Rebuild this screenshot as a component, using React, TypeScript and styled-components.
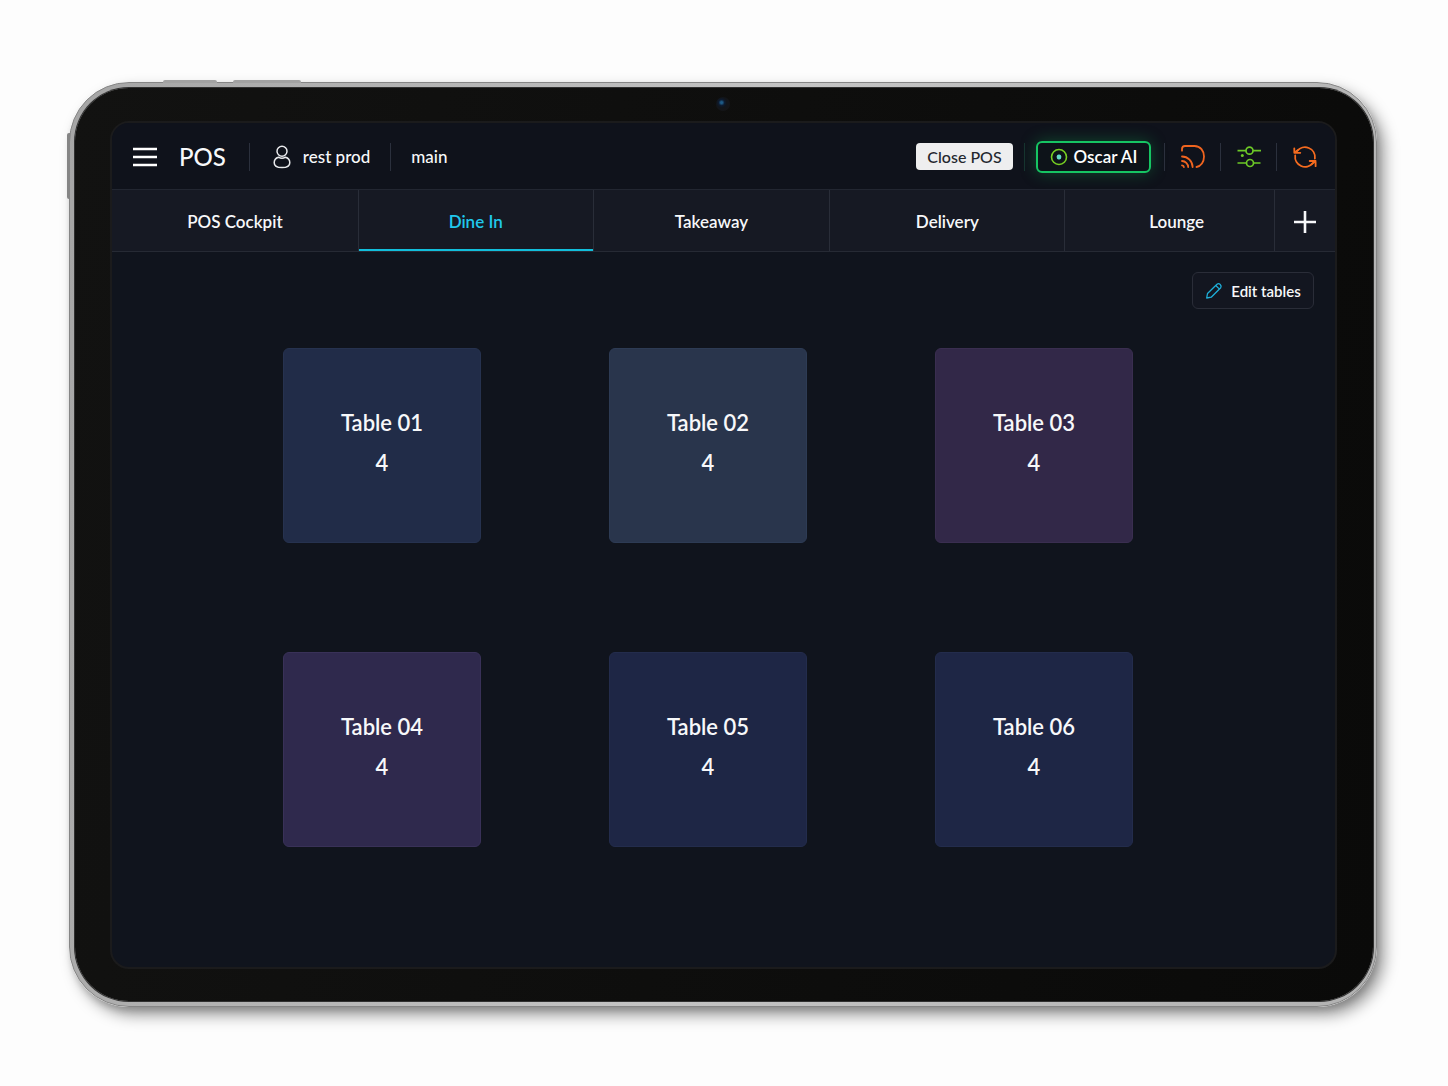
import React, { useState } from "react";
import styled, { createGlobalStyle } from "styled-components";

const GlobalStyle = createGlobalStyle`
  *, *::before, *::after { box-sizing: border-box; }
  body {
    margin: 0;
    background: #fdfdfd;
    color: #f7f8fa;
    font-family: Lato, "Open Sans", sans-serif;
  }
  button { font-family: inherit; cursor: pointer; }
`;

const Page = styled.div`
  display: flex;
  min-height: 100vh;
  padding: 82px 71px 79px 69px;
`;

const Device = styled.div`
  position: relative;
  display: flex;
  flex: 1;
  padding: 5px 3px 5px 5px;
  border: 1px solid #858585;
  border-radius: 60px;
  background: linear-gradient(100deg, #a5a5a5, #c4c4c4 50%, #b2b2b2);
  box-shadow: 7px 8px 15px rgba(0, 0, 0, 0.4), 2px 4px 6px rgba(0, 0, 0, 0.14);
`;

const TopKey = styled.span<{ $left: number; $width: number }>`
  position: absolute;
  top: -3px;
  left: ${(p) => p.$left}px;
  width: ${(p) => p.$width}px;
  height: 3px;
  border-radius: 2px 2px 0 0;
  background: #a2a2a2;
`;

const SideKey = styled.span`
  position: absolute;
  top: 50px;
  left: -3px;
  width: 3px;
  height: 66px;
  border-radius: 2px 0 0 2px;
  background: #858585;
`;

const Bezel = styled.div`
  position: relative;
  display: flex;
  flex: 1;
  padding: 33px 36px 32px 35px;
  border-radius: 54px;
  background: linear-gradient(100deg, #121211, #0a0a09);
  box-shadow: 0 0 0 1px #303030;
`;

const Camera = styled.span`
  position: absolute;
  top: 9px;
  left: 50%;
  width: 14px;
  height: 14px;
  margin-left: -8px;
  border-radius: 50%;
  background: radial-gradient(circle at 40% 40%, #1d5a86 0 1px, #0d1b30 3px, #11151b 5px, #141518 7px);
`;

const Screen = styled.div`
  display: flex;
  flex: 1;
  flex-direction: column;
  overflow: hidden;
  border: 2px solid #1b1b1c;
  border-radius: 19px;
  background: #10141d;
`;

const Header = styled.header`
  display: flex;
  align-items: center;
  justify-content: space-between;
  height: 67px;
  padding: 1px 3px 0 21px;
  border-bottom: 1px solid #222631;
  background: #0f121b;
`;

const Group = styled.div`
  display: flex;
  align-items: center;
`;

const IconButton = styled.button<{ $color: string }>`
  display: flex;
  align-items: center;
  justify-content: center;
  padding: 0;
  border: 0;
  background: none;
  color: ${(p) => p.$color};
`;

const Brand = styled.h1`
  margin: 0 23px 0 22px;
  font-size: 24px;
  font-weight: 500;
  line-height: 28px;
`;

const Divider = styled.span<{ $tone?: string }>`
  width: 1px;
  height: 28px;
  background: ${(p) => p.$tone || "#2b303d"};
`;

const User = styled.div`
  display: flex;
  align-items: center;
  gap: 12px;
  padding: 0 20px 0 23px;
`;

const HeaderText = styled.span`
  font-size: 17px;
  font-weight: 500;
  line-height: 24px;
`;

const Branch = styled(HeaderText)`
  padding-left: 20px;
`;

const ClosePos = styled.button`
  width: 97px;
  height: 27px;
  margin-right: 11px;
  padding: 0;
  border: 0;
  border-radius: 4px;
  background: #eeeeef;
  color: #24272e;
  font-size: 16px;
  font-weight: 500;
`;

const OscarButton = styled.button`
  display: flex;
  align-items: center;
  justify-content: center;
  gap: 6px;
  width: 115px;
  height: 32px;
  margin: 0 13px 0 11px;
  padding: 0;
  border: 2px solid #16c563;
  border-radius: 6px;
  background: #0d1319;
  color: #ffffff;
  font-size: 17px;
  font-weight: 600;
  box-shadow: 0 0 16px rgba(16, 170, 80, 0.36);
`;

const Tools = styled.div`
  display: flex;
  align-items: center;

  > button { width: 55px; height: 32px; }
`;

const Tabs = styled.nav`
  display: grid;
  grid-template-columns: 247fr 235fr 237fr 235fr 210fr 60fr;
  height: 62px;
  border-bottom: 1px solid #262a34;
  background: #161923;
`;

const Tab = styled.button<{ $active?: boolean }>`
  display: flex;
  align-items: center;
  justify-content: center;
  padding: 2px 0 0;
  border: 0;
  border-right: 1px solid #292d38;
  background: none;
  color: ${(p) => (p.$active ? "#20c8ec" : "#f7f8fa")};
  box-shadow: ${(p) => (p.$active ? "inset 0 -2px 0 #12bedb" : "none")};
  font-size: 17px;
  font-weight: 600;
  line-height: 24px;

  &:nth-last-child(2) { padding-left: 14px; }
  &:last-child { border-right: 0; }
`;

const Main = styled.main`
  display: flex;
  flex: 1;
  flex-direction: column;
  padding: 20px 21px 40px;
`;

const EditButton = styled.button`
  display: flex;
  align-items: center;
  align-self: flex-end;
  justify-content: center;
  gap: 8px;
  width: 122px;
  height: 37px;
  padding: 0;
  border: 1px solid #2a2d38;
  border-radius: 6px;
  background: #131620;
  color: #f7f8fa;
  font-size: 15px;
  font-weight: 600;
`;

const Floor = styled.section`
  display: grid;
  grid-template-columns: repeat(3, 198px);
  gap: 109px 128px;
  justify-content: center;
  padding: 39px 31px 0 0;
`;

const TableCard = styled.button<{ $fill: string; $edge: string }>`
  display: flex;
  flex-direction: column;
  align-items: center;
  justify-content: center;
  height: 195px;
  padding: 0 0 6px;
  border: 1px solid ${(p) => p.$edge};
  border-radius: 6px;
  background: ${(p) => p.$fill};
  color: #f7f8fa;
  font-size: 22px;
  font-weight: 600;
  line-height: 40px;
`;

const tabs = ["POS Cockpit", "Dine In", "Takeaway", "Delivery", "Lounge"];

const tables = [
  { name: "Table 01", seats: 4, fill: "#212c48", edge: "#26324f" },
  { name: "Table 02", seats: 4, fill: "#29354c", edge: "#2d3b54" },
  { name: "Table 03", seats: 4, fill: "#322848", edge: "#3a2e50" },
  { name: "Table 04", seats: 4, fill: "#2f294d", edge: "#393158" },
  { name: "Table 05", seats: 4, fill: "#1e2645", edge: "#232c4c" },
  { name: "Table 06", seats: 4, fill: "#1e2645", edge: "#232c4c" },
];

const MenuIcon = () => (
  <svg width="24" height="20" viewBox="0 0 24 20" stroke="currentColor" strokeWidth="2.6" aria-hidden="true">
    <path d="M0 2h24M0 10h24M0 18h24" />
  </svg>
);

const UserIcon = () => (
  <svg width="18" height="24" viewBox="0 0 18 24" fill="none" stroke="#e8e9ec" strokeWidth="1.5" aria-hidden="true">
    <circle cx="9" cy="6.3" r="5" />
    <path d="M5.500 12.200C2.700 12.900 1.200 15.200 1.200 17.700c0 3.200 3 4.900 7.800 4.900s7.800-1.700 7.800-4.900c0-2.500-1.500-4.800-4.300-5.500-2 1.200-5 1.200-7 0Z" />
  </svg>
);

const TargetIcon = () => (
  <svg width="18" height="18" viewBox="0 0 18 18" aria-hidden="true">
    <circle cx="9" cy="9" r="7.500" fill="none" stroke="#76cf22" strokeWidth="1.600" />
    <rect x="6.800" y="6.400" width="4.400" height="5.200" rx="1.800" fill="#62dbc9" />
  </svg>
);

const CastIcon = () => (
  <svg width="26" height="26" viewBox="0 0 26 26" fill="none" stroke="currentColor" strokeWidth="1.800" strokeLinecap="round" aria-hidden="true">
    <path d="M2 6.700V5Q2 2 5 2H14.500C20.500 2 24 7 24 12.500C24 18 21 22.300 16.500 23" />
    <path d="M2 12.500a10.600 10.600 0 0 1 10.600 10.600M2 17a6.200 6.200 0 0 1 6.200 6.100M2 21.300a2 2 0 0 1 1.900 1.800" />
  </svg>
);

const SlidersIcon = () => (
  <svg width="26" height="24" viewBox="0 0 26 24" fill="none" stroke="currentColor" strokeWidth="1.700" aria-hidden="true">
    <path d="M1.500 5.700h8.500M17 5.700H25M1.500 18h9M17.500 18h7" />
    <circle cx="13.500" cy="5.700" r="3.500" />
    <circle cx="14" cy="18" r="3.500" />
    <circle cx="6.300" cy="10.500" r="1.500" fill="currentColor" stroke="none" />
  </svg>
);

const RefreshIcon = () => (
  <svg width="26" height="26" viewBox="0 0 26 26" fill="none" stroke="currentColor" strokeWidth="1.800" strokeLinecap="round" strokeLinejoin="round" aria-hidden="true">
    <path d="M5 7.200A10 10 0 0 1 22.900 14.500M20.800 19.200A10 10 0 0 1 3.200 11.500" />
    <path d="M2.300 4.300V8.800H8.300M2.300 8.800 6 6M17.700 17h5.900v5.200M23.600 17 19.500 20.400" />
  </svg>
);

const PlusIcon = () => (
  <svg width="24" height="24" viewBox="0 0 24 24" stroke="currentColor" strokeWidth="2.600" aria-hidden="true">
    <path d="M12 1v22M1 12h22" />
  </svg>
);

const PencilIcon = () => (
  <svg width="18" height="18" viewBox="0 0 18 18" fill="none" stroke="#1eaed8" strokeWidth="1.300" strokeLinejoin="round" aria-hidden="true">
    <path d="M1.700 16 2.500 11.500 12 2.300Q13.600 1 15.200 2.500T15.700 5.700L6.200 15.200ZM10.800 3.500l3.700 3.600" />
  </svg>
);

export default function App() {
  const [active, setActive] = useState("Dine In");

  return (
    <>
      <GlobalStyle />
      <Page>
        <Device>
          <TopKey $left={93} $width={54} />
          <TopKey $left={163} $width={68} />
          <SideKey />
          <Bezel>
            <Camera />
            <Screen>
              <Header>
                <Group>
                  <IconButton $color="#ffffff" aria-label="Menu">
                    <MenuIcon />
                  </IconButton>
                  <Brand>POS</Brand>
                  <Divider />
                  <User>
                    <UserIcon />
                    <HeaderText>rest prod</HeaderText>
                  </User>
                  <Divider />
                  <Branch>main</Branch>
                </Group>
                <Group>
                  <ClosePos>Close POS</ClosePos>
                  <Divider $tone="#17332f" />
                  <OscarButton>
                    <TargetIcon />
                    Oscar AI
                  </OscarButton>
                  <Tools>
                    <Divider />
                    <IconButton $color="#f0641f" aria-label="Cast">
                      <CastIcon />
                    </IconButton>
                    <Divider />
                    <IconButton $color="#6cc827" aria-label="Settings">
                      <SlidersIcon />
                    </IconButton>
                    <Divider />
                    <IconButton $color="#f56b1f" aria-label="Refresh">
                      <RefreshIcon />
                    </IconButton>
                  </Tools>
                </Group>
              </Header>
              <Tabs>
                {tabs.map((name) => (
                  <Tab key={name} $active={name === active} onClick={() => setActive(name)}>
                    {name}
                  </Tab>
                ))}
                <Tab aria-label="Add area">
                  <PlusIcon />
                </Tab>
              </Tabs>
              <Main>
                <EditButton>
                  <PencilIcon />
                  Edit tables
                </EditButton>
                <Floor>
                  {tables.map((t) => (
                    <TableCard key={t.name} $fill={t.fill} $edge={t.edge}>
                      <span>{t.name}</span>
                      <span>{t.seats}</span>
                    </TableCard>
                  ))}
                </Floor>
              </Main>
            </Screen>
          </Bezel>
        </Device>
      </Page>
    </>
  );
}
